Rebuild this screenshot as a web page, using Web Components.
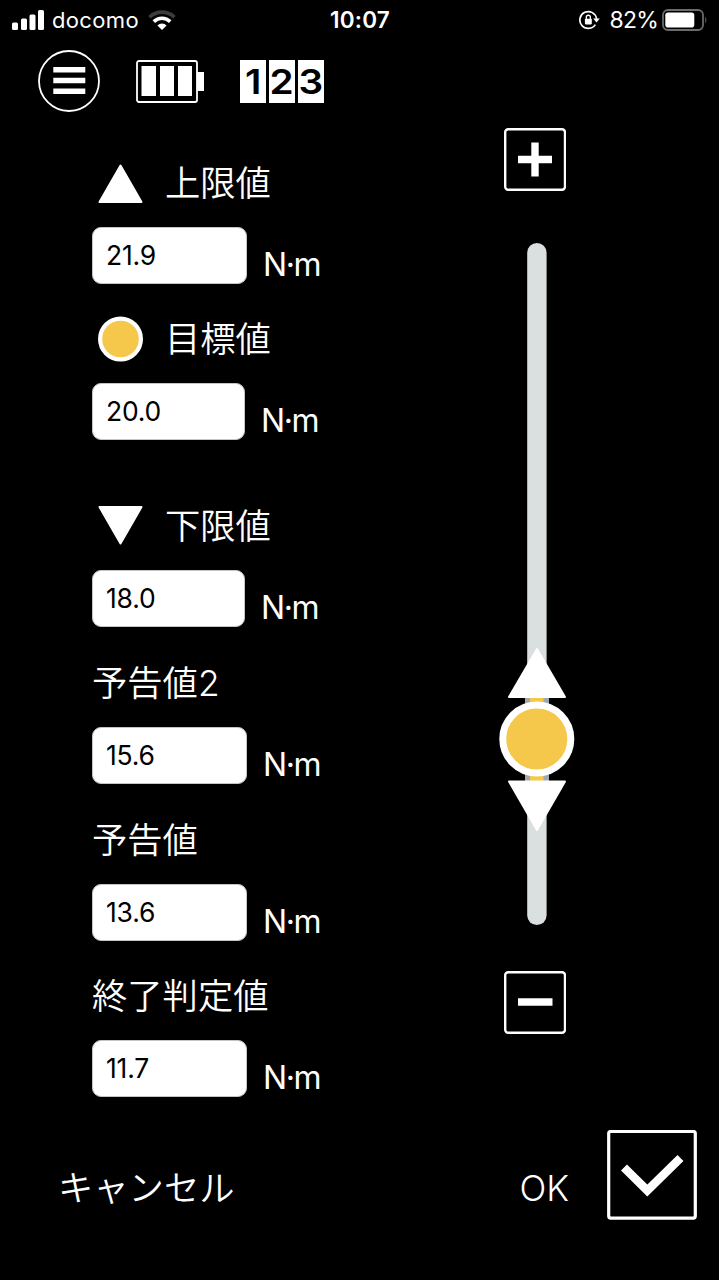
<!DOCTYPE html>
<html lang="ja">
<head>
<meta charset="utf-8">
<meta name="viewport" content="width=device-width, initial-scale=1">
<title>設定値</title>
<style>
  html, body { margin: 0; background: #000; }
  body {
    width: 719px;
    height: 1280px;
    overflow: hidden;
    color: #fff;
    font-family: Inter, "Noto Sans CJK JP", sans-serif;
  }
</style>
</head>
<body>
<torque-settings></torque-settings>

<script>
/** <status-bar> 端末のステータスバー（電波・時刻・電池） */
class StatusBar extends HTMLElement {
  constructor() {
    super();
    this.attachShadow({ mode: "open" }).innerHTML = `
      <style>
        :host { display: flex; height: 40px; align-items: center; font-size: 22px; line-height: 40px; }
        .side { flex: 1; display: flex; align-items: center; }
        .left { padding-left: 12px; }
        .right { justify-content: flex-end; padding-right: 11px; }
        .carrier { margin: 0 9px 0 8px; letter-spacing: .35px; }
        .time { font-weight: 600; font-size: 22.5px; letter-spacing: .2px; }
        .percent { font-size: 23px; margin: 0 4px 0 10px; letter-spacing: -.8px; }
        svg { display: block; flex: none; }
      </style>
      <div class="side left">
        <svg width="32" height="20" viewBox="0 0 32 20" fill="#fff">
          <rect y="12.5" width="6" height="7.5" rx="1.5"/>
          <rect x="9" y="8.5" width="6" height="11.5" rx="1.5"/>
          <rect x="17.5" y="4.5" width="6" height="15.5" rx="1.5"/>
          <rect x="26" width="6" height="20" rx="1.5"/>
        </svg>
        <span class="carrier">docomo</span>
        <svg width="28" height="20" viewBox="0 0 28 20" fill="none" stroke-width="3.6">
          <path d="M1.5 7.2A18 18 0 0 1 26.500 7.200" stroke="#3c3c3c"/>
          <path d="M5.800 11.600A11.700 11.700 0 0 1 22.200 11.600" stroke="#fff"/>
          <path d="M14 20L9.400 15.400A6.500 6.500 0 0 1 18.600 15.400Z" fill="#fff"/>
        </svg>
      </div>
      <span class="time">10:07</span>
      <div class="side right">
        <svg width="21" height="20" viewBox="0 0 21 20" fill="none" stroke="#fff" stroke-width="1.7">
          <path d="M16.300 14.600A8.400 8.400 0 1 1 17.600 8.800"/>
          <path d="M14.200 8.400H20.800L17.500 12.600Z" fill="#fff" stroke="none"/>
          <rect x="5.900" y="8.800" width="6.900" height="5.600" rx=".8" fill="#fff" stroke="none"/>
          <path d="M7.300 9V7.300a2.050 2.050 0 0 1 4.100 0V9" stroke-width="1.300"/>
        </svg>
        <span class="percent">82%</span>
        <svg width="46" height="22" viewBox="0 0 46 22">
          <rect x="1" y="1" width="40" height="20" rx="5" fill="none" stroke="#6b6b6b" stroke-width="1.800"/>
          <rect x="3.300" y="3.500" width="29" height="15" rx="2.800" fill="#fff"/>
          <path d="M43.300 7.500q2.200 3.500 0 7z" fill="#6b6b6b"/>
        </svg>
      </div>`;
  }
}

/** <tool-bar> メニュー・工具電池残量・カウンタ */
class ToolBar extends HTMLElement {
  constructor() {
    super();
    this.attachShadow({ mode: "open" }).innerHTML = `
      <style>
        :host { display: flex; align-items: center; height: 62px; padding: 10px 0 0 38px; }
        svg { display: block; }
        .battery { margin-left: 36px; }
        .counter { display: flex; gap: 3px; margin-left: 35px; }
        .counter span {
          width: 26px; height: 43px; background: #fff; color: #000;
          display: flex; align-items: center; justify-content: center;
          font: 600 34px/43px Inter, sans-serif;
        }
        .counter b { font-weight: 600; transform: scaleX(1.14); }
      </style>
      <svg width="62" height="62" viewBox="0 0 62 62">
        <circle cx="31" cy="31" r="30" fill="none" stroke="#fff" stroke-width="1.800"/>
        <path d="M15.300 19.700h32M15.300 30.500h32M15.300 41.300h32" stroke="#fff" stroke-width="5.400"/>
      </svg>
      <svg class="battery" width="69" height="43" viewBox="0 0 69 43">
        <rect x="1" y="1" width="60" height="41" rx="2" fill="none" stroke="#fff" stroke-width="1.800"/>
        <path d="M5.500 6h14.500v30H5.500zM24 6h14v30H24zM42 6h14v30H42zM61 12h7v19h-7z" fill="#fff"/>
      </svg>
      <div class="counter"><span><b>1</b></span><span><b>2</b></span><span><b>3</b></span></div>`;
  }
}

/**
 * <value-field value="20.0"> ラベルはデフォルト slot、印は slot="mark"
 */
class ValueField extends HTMLElement {
  constructor() {
    super();
    this.attachShadow({ mode: "open" });
  }

  connectedCallback() {
    this.shadowRoot.innerHTML = `
      <style>
        :host { display: block; }
        .label { display: flex; align-items: center; height: 56px; font-size: 35.3px; line-height: 56px; font-weight: 350; }
        .text { padding-top: 2px; }
        .row { display: flex; align-items: center; gap: 16px; margin-top: 16px; }
        .box {
          box-sizing: border-box; width: var(--box-width, 155px); height: 57px;
          padding-left: 13px; border: 1px solid #c4c4c4; border-radius: 9px;
          background: #fff; color: #000; font-size: 26.5px; line-height: 54px; letter-spacing: -.2px;
        }
        .unit { font-size: 32px; line-height: 57px; letter-spacing: -1.4px; position: relative; top: 9px; }
      </style>
      <div class="label"><slot name="mark"></slot><span class="text"><slot></slot></span></div>
      <div class="row"><div class="box">${this.getAttribute("value")}</div><span class="unit">N·m</span></div>`;
  }
}

/** <value-mark type="up|target|down"> 上限・目標・下限の印 */
class ValueMark extends HTMLElement {
  constructor() {
    super();
    this.attachShadow({ mode: "open" });
  }

  connectedCallback() {
    const shapes = {
      up: `<path d="M23 5.500L44 42H2Z" fill="#fff" stroke="#fff" stroke-width="2" stroke-linejoin="round"/>`,
      target: `<circle cx="23" cy="23" r="20.400" fill="#f5c84c" stroke="#fff" stroke-width="4.200"/>`,
      down: `<path d="M23 40.500L44 4H2Z" fill="#fff" stroke="#fff" stroke-width="2" stroke-linejoin="round"/>`
    };
    this.shadowRoot.innerHTML = `
      <style>
        :host { display: block; margin: 0 22px 0 6px; }
        svg { display: block; }
      </style>
      <svg width="45" height="46" viewBox="0.500 0 45 46">${shapes[this.getAttribute("type")]}</svg>`;
  }
}

/** <step-button type="plus|minus"> */
class StepButton extends HTMLElement {
  constructor() {
    super();
    this.attachShadow({ mode: "open" });
  }

  connectedCallback() {
    const d = this.getAttribute("type") === "plus" ? "M14 31.500h34M31 14.500v34" : "M14 31h34.500";
    this.shadowRoot.innerHTML = `
      <style>:host, svg { display: block; }</style>
      <svg width="62" height="63" viewBox="0 0 62 63" fill="none" stroke="#fff">
        <rect x="1.200" y="1.300" width="59.800" height="60.500" rx="3" stroke-width="2.400"/>
        <path d="${d}" stroke-width="7.400"/>
      </svg>`;
  }
}

/** <range-slider> 縦スライダー。3つのつまみで上限・目標・下限を表す */
class RangeSlider extends HTMLElement {
  constructor() {
    super();
    this.attachShadow({ mode: "open" }).innerHTML = `
      <style>:host, svg { display: block; }</style>
      <svg width="76" height="682" viewBox="0 0 76 682">
        <rect x="28.200" y="0" width="19.400" height="682" rx="9.700" fill="#d9e0df"/>
        <rect x="26" y="452" width="24" height="88" fill="#9eaab0"/>
        <rect x="31" y="452" width="13.500" height="88" fill="#f5c84c"/>
        <g fill="#fff" stroke="#fff" stroke-width="2" stroke-linejoin="round">
          <path d="M38 406L66 454H10Z"/>
          <path d="M38 587L66 538.500H10Z"/>
        </g>
        <circle cx="37.800" cy="496" r="34" fill="#f5c84c" stroke="#fff" stroke-width="7"/>
      </svg>`;
  }
}

/** <action-bar> キャンセル / OK */
class ActionBar extends HTMLElement {
  constructor() {
    super();
    this.attachShadow({ mode: "open" }).innerHTML = `
      <style>
        :host { display: flex; justify-content: space-between; height: 90px; padding: 0 22px 0 58px; font-size: 35.3px; font-weight: 350; }
        span { line-height: 56px; padding-top: 31px; }
        .ok { display: flex; gap: 38px; }
        svg { display: block; }
      </style>
      <span>キャンセル</span>
      <div class="ok">
        <span>OK</span>
        <svg width="90" height="90" viewBox="0 0 90 90" fill="none" stroke="#fff">
          <rect x="1.700" y="1.500" width="86.600" height="86.600" rx="2" stroke-width="3.200"/>
          <path d="M17 37.500L40.300 60.500L73.500 28" stroke-width="8.500"/>
        </svg>
      </div>`;
  }
}

/** <torque-settings> 画面全体 */
class TorqueSettings extends HTMLElement {
  constructor() {
    super();
    this.attachShadow({ mode: "open" }).innerHTML = `
      <style>
        :host { display: flex; flex-direction: column; width: 719px; height: 1280px; background: #000; }
        main { display: flex; height: 970px; padding-top: 16px; }
        .fields { width: 407px; padding: 27px 0 0 92px; }
        .fields > * { margin-bottom: 27px; }
        .fields > .wide-gap { margin-bottom: 58px; }
        .fields > .lower { margin-bottom: 28px; }
        .narrow { --box-width: 153px; }
        .level { display: flex; flex-direction: column; align-items: center; width: 76px; }
        range-slider { margin: 52px 0 46px; }
        step-button { margin-right: 4px; }
        action-bar { margin-top: 32px; }
      </style>
      <status-bar></status-bar>
      <tool-bar></tool-bar>
      <main>
        <div class="fields">
          <value-field value="21.9"><value-mark slot="mark" type="up"></value-mark>上限値</value-field>
          <value-field value="20.0" class="narrow wide-gap"><value-mark slot="mark" type="target"></value-mark>目標値</value-field>
          <value-field value="18.0" class="narrow lower"><value-mark slot="mark" type="down"></value-mark>下限値</value-field>
          <value-field value="15.6" class="lower">予告値2</value-field>
          <value-field value="13.6">予告値</value-field>
          <value-field value="11.7">終了判定値</value-field>
        </div>
        <div class="level">
          <step-button type="plus"></step-button>
          <range-slider></range-slider>
          <step-button type="minus"></step-button>
        </div>
      </main>
      <action-bar></action-bar>`;
  }
}

customElements.define("status-bar", StatusBar);
customElements.define("tool-bar", ToolBar);
customElements.define("value-field", ValueField);
customElements.define("value-mark", ValueMark);
customElements.define("step-button", StepButton);
customElements.define("range-slider", RangeSlider);
customElements.define("action-bar", ActionBar);
customElements.define("torque-settings", TorqueSettings);
</script>
</body>
</html>
